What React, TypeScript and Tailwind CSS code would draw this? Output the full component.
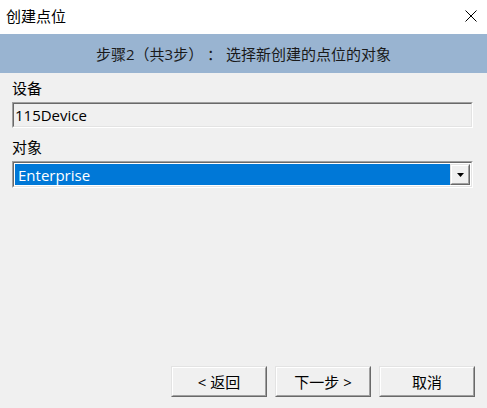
import React from "react";

const font = { fontFamily: '"Open Sans", "Noto Sans CJK SC", sans-serif' };

const Sunken = ({ children, className = "" }: { children: React.ReactNode; className?: string }) => (
  <div className={`border border-t-[#a0a0a0] border-l-[#a0a0a0] border-b-white border-r-white ${className}`}>
    <div className="h-full border border-t-[#696969] border-l-[#696969] border-b-[#e3e3e3] border-r-[#e3e3e3]">
      {children}
    </div>
  </div>
);

const Button = ({ label }: { label: string }) => (
  <button className="w-[96px] h-[31px] border border-t-[#e3e3e3] border-l-[#e3e3e3] border-b-[#696969] border-r-[#696969] bg-[#f0f0f0] p-0">
    <div className="h-full flex items-center justify-center border border-t-white border-l-white border-b-[#a0a0a0] border-r-[#a0a0a0] text-[15px] leading-[18px] text-black">
      {label}
    </div>
  </button>
);

export default function App() {
  return (
    <div className="w-[487px] h-[408px] bg-[#f0f0f0] flex flex-col text-black" style={font}>
      {/* title bar */}
      <div className="h-[34px] bg-white flex items-center justify-between pl-[6px] pr-[10px]">
        <span className="text-[15px] leading-[18px] -mt-[3px]">创建点位</span>
        <svg width="12" height="12" viewBox="0 0 12 12" className="-mt-[3px]">
          <path d="M0.5 0.5 L11.5 11.5 M11.5 0.5 L0.5 11.5" stroke="#000" strokeWidth="1" />
        </svg>
      </div>

      {/* step band */}
      <div className="h-[39px] bg-[#99b4d1] flex items-center justify-center text-[15px] leading-[18px] text-[#1a1a1a] whitespace-pre">
        步骤2（共3步） ： 选择新创建的点位的对象
      </div>

      {/* form */}
      <div className="flex-1 flex flex-col pl-[12px] pr-[14px]">
        <div className="mt-[6px] text-[15px] leading-[18px]">设备</div>
        <Sunken className="mt-[5px] h-[26px]">
          <div className="h-full flex items-center pl-[1px] text-[15px] leading-[18px] bg-[#f0f0f0]">115Device</div>
        </Sunken>

        <div className="mt-[10px] text-[15px] leading-[18px]">对象</div>
        <Sunken className="mt-[5px] h-[27px]">
          <div className="h-full flex bg-white p-px">
            <div className="flex-1 bg-[#0078d7] text-white text-[15px] leading-[18px] flex items-center pl-[3px]">
              Enterprise
            </div>
            <div className="w-[20px] border border-t-[#e3e3e3] border-l-[#e3e3e3] border-b-[#696969] border-r-[#696969] bg-[#f0f0f0]">
              <div className="h-full flex items-center justify-center border border-t-white border-l-white border-b-[#a0a0a0] border-r-[#a0a0a0]">
                <svg width="7" height="4" viewBox="0 0 7 4">
                  <path d="M0 0 H7 L3.5 4 Z" fill="#000" />
                </svg>
              </div>
            </div>
          </div>
        </Sunken>
      </div>

      {/* buttons */}
      <div className="flex justify-end gap-[8px] pr-[12px] mb-[11px]">
        <Button label="< 返回" />
        <Button label="下一步 >" />
        <Button label="取消" />
      </div>
    </div>
  );
}
